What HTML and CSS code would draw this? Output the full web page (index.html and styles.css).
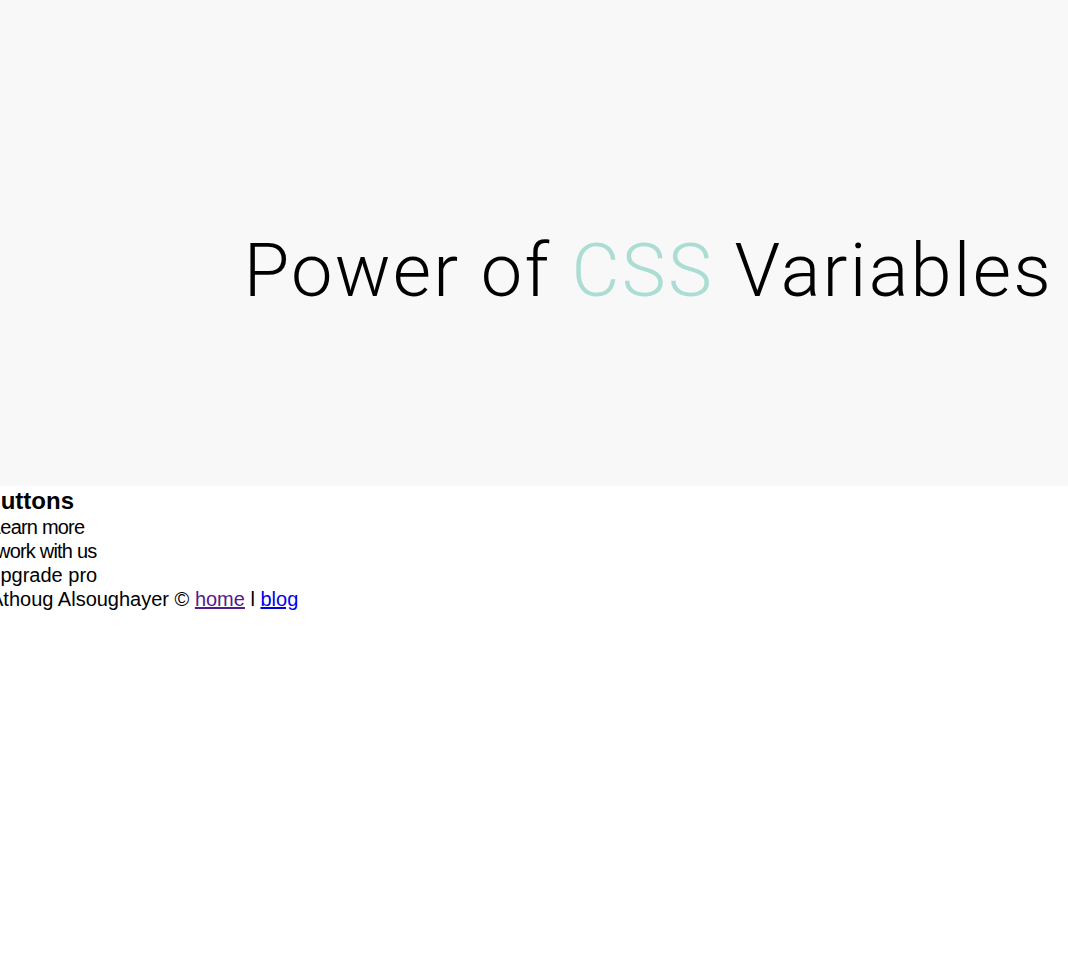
FILE: index.html
```html
<!DOCTYPE html>
<html>
<head>
<meta charset="utf-8">
<link rel="stylesheet" href="styles.css">
</head>
<body>
<header class="hero">
  <h1 class="title">Power of <span class="accent">CSS</span> Variables</h1>
</header>
<main class="content">
  <h2 class="heading">buttons</h2>
  <div class="btn btn-learn">Learn more</div>
  <div class="btn btn-work">work with us</div>
  <div class="btn btn-upgrade">Upgrade pro</div>
  <footer class="footer">Athoug Alsoughayer © <a class="visited" href="#home">home</a> l <a href="#blog">blog</a></footer>
</main>
</body>
</html>
```

FILE: styles.css
```css
html, body {
  margin: 0;
  padding: 0;
  background: #ffffff;
  font-family: "Liberation Sans", Arial, sans-serif;
  color: #000;
  overflow: hidden;
}
.hero {
  height: 486px;
  background: #f8f8f8;
  display: flex;
  justify-content: flex-end;
  align-items: flex-start;
  padding-top: 228px;
  padding-right: 15px;
  box-sizing: border-box;
}
.title {
  margin: 0;
  font-family: Roboto, "Liberation Sans", sans-serif;
  font-weight: 300;
  font-size: 74px;
  line-height: 86px;
  letter-spacing: 2.25px;
  white-space: nowrap;
}
.accent {
  color: #acddd5;
}
.content {
  padding-top: 1px;
}
.heading {
  margin: 0 0 0 -14px;
  font-size: 24px;
  font-weight: bold;
  line-height: 28px;
}
.btn {
  font-size: 20px;
  line-height: 24px;
}
.btn-learn {
  letter-spacing: -0.8px;
  margin-left: -10px;
}
.btn-work {
  letter-spacing: -0.8px;
  margin-left: -4px;
}
.btn-upgrade {
  margin-left: -14px;
}
.footer {
  font-size: 20px;
  line-height: 24px;
  margin-left: -10px;
}
a {
  color: #0000ee;
}
a.visited {
  color: #551a8b;
}
```
